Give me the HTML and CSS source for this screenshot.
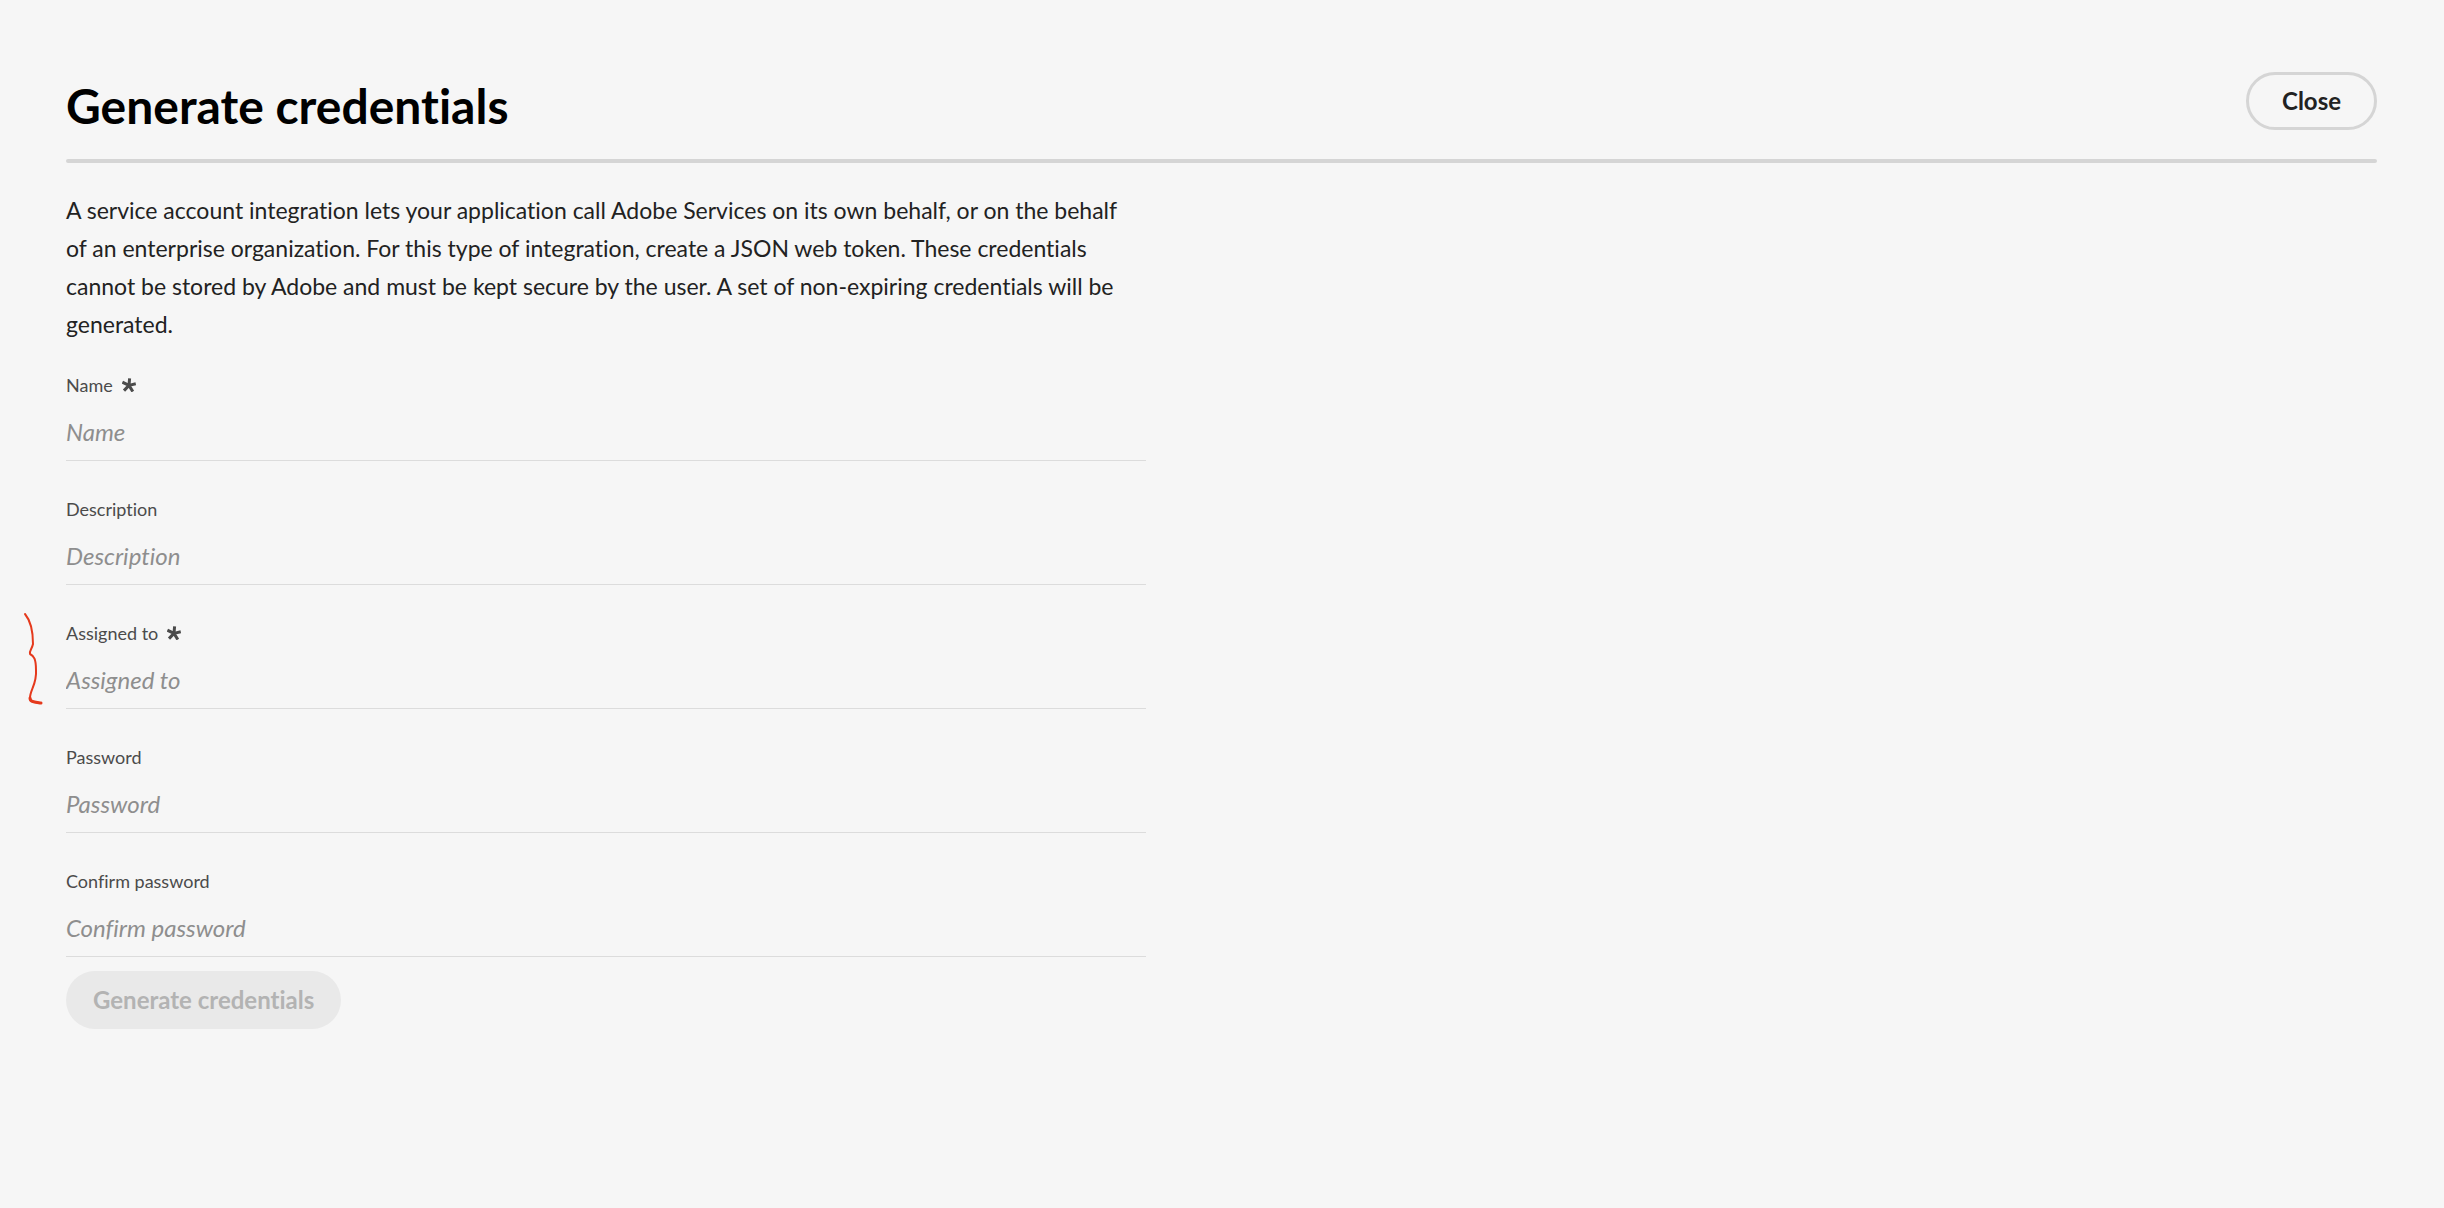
FILE: index.html
```html
<!DOCTYPE html>
<html lang="en">
<head>
    <meta charset="UTF-8">
    <meta name="viewport" content="width=device-width, initial-scale=1.0">
    <title>Generate credentials</title>
    <link rel="stylesheet" href="styles.css">
</head>
<body>
    <div class="container">
        <header class="header">
            <h1>Generate credentials</h1>
            <button type="button" class="btn btn-outline">Close</button>
        </header>
        <form class="form">
            <p class="intro">A service account integration lets your application call Adobe Services on its own behalf, or on the behalf<br>
            of an enterprise organization. For this type of integration, create a JSON web token. These credentials<br>
            cannot be stored by Adobe and must be kept secure by the user. A set of non-expiring credentials will be<br>
            generated.</p>
            <div class="form-group">
                <label for="name">Name
                    <svg class="asterisk" viewBox="0 0 14 14" aria-hidden="true"><path d="M7 7.4 7.6 0.4M7 7.4 13.8 5.8M7 7.4 10.8 13.6M7 7.4 2 12.6M7 7.4 0.4 4.2"/></svg>
                </label>
                <input type="text" id="name" placeholder="Name" required>
            </div>
            <div class="form-group">
                <label for="description">Description</label>
                <input type="text" id="description" placeholder="Description">
            </div>
            <div class="form-group">
                <svg class="marker" viewBox="0 0 20 94" aria-hidden="true"><path d="M2 2C7 8 10 19 10 32C9 37 6 39 7 42C11 44 13 47 13 58C14 72 7 78 7 86C7 90 11 90 18 91"/><path class="marker-end" d="M7 86C7 90 11 90 18 91"/></svg>
                <label for="assigned">Assigned to
                    <svg class="asterisk" viewBox="0 0 14 14" aria-hidden="true"><path d="M7 7.4 7.6 0.4M7 7.4 13.8 5.8M7 7.4 10.8 13.6M7 7.4 2 12.6M7 7.4 0.4 4.2"/></svg>
                </label>
                <input type="text" id="assigned" placeholder="Assigned to" required>
            </div>
            <div class="form-group">
                <label for="password">Password</label>
                <input type="password" id="password" placeholder="Password">
            </div>
            <div class="form-group">
                <label for="confirm">Confirm password</label>
                <input type="password" id="confirm" placeholder="Confirm password">
            </div>
            <button type="submit" class="btn btn-submit" disabled>Generate credentials</button>
        </form>
    </div>
</body>
</html>
```
FILE: styles.css
```css
* {
    box-sizing: border-box;
}
body {
    margin: 0;
    background-color: #f6f6f6;
    color: #222;
    font-family: Lato, "Noto Sans", sans-serif;
    font-size: 24px;
    font-variant-ligatures: none;
}
.container {
    padding: 72px 67px 40px 66px;
}
.header {
    display: flex;
    justify-content: space-between;
    align-items: flex-start;
    padding-bottom: 19px;
    position: relative;
}
.header::after {
    content: "";
    position: absolute;
    left: 0;
    right: 0;
    bottom: -4px;
    height: 4px;
    border-radius: 2px;
    background-color: #d5d5d5;
}
h1 {
    margin: 0;
    color: #000;
    font-size: 48px;
    font-weight: 700;
    line-height: 68px;
}
.btn {
    height: 58px;
    border-radius: 29px;
    font-family: inherit;
    font-size: 24px;
    font-weight: 700;
    font-variant-ligatures: none;
    cursor: pointer;
}
.btn-outline {
    padding: 0 33px 2px;
    border: 3px solid #d5d5d5;
    background-color: transparent;
    color: #222;
}
.btn-submit {
    margin-top: 14px;
    padding: 0 27px 2px;
    border: none;
    background-color: #e9e9e9;
    color: #b3b3b3;
    cursor: default;
}
.form {
    max-width: 1080px;
    margin-top: 32px;
}
.intro {
    margin: 0 0 30px;
    font-size: 23px;
    line-height: 38px;
    white-space: nowrap;
}
.form-group {
    position: relative;
    margin-bottom: 36px;
}
.form-group:last-of-type {
    margin-bottom: 0;
}
.form-group label {
    display: flex;
    align-items: center;
    gap: 9px;
    color: #4b4b4b;
    font-size: 18px;
    line-height: 24px;
}
.form-group input {
    display: block;
    width: 100%;
    height: 64px;
    padding: 6px 0 0;
    border: none;
    border-bottom: 1px solid #dcdcdc;
    border-radius: 0;
    outline: none;
    background-color: transparent;
    color: #222;
    font-family: inherit;
    font-size: 24px;
}
.form-group input::placeholder {
    color: #8e8e8e;
    font-style: italic;
    font-variant-ligatures: none;
    opacity: 1;
}
.asterisk {
    width: 14px;
    height: 14px;
    fill: none;
    stroke: #4b4b4b;
    stroke-width: 3;
}
.marker {
    position: absolute;
    top: -9px;
    left: -43px;
    width: 20px;
    height: 94px;
    fill: none;
    stroke: #e5391c;
    stroke-width: 2;
    stroke-linecap: round;
    stroke-linejoin: round;
}
.marker-end {
    stroke-width: 3;
}
```
